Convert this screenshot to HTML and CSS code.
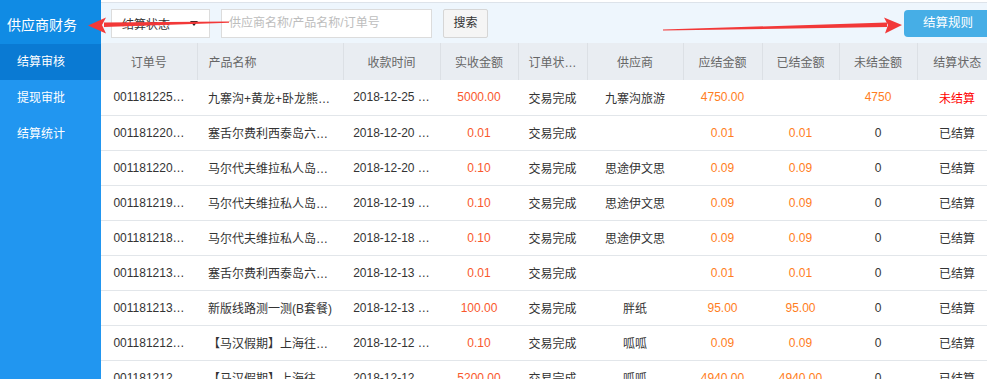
FILE: index.html
```html
<!DOCTYPE html>
<html lang="zh">
<head>
<meta charset="utf-8">
<title>供应商财务</title>
<link rel="stylesheet" href="styles.css">
</head>
<body>
<div class="layout">
  <aside class="sidebar">
    <div class="sb-title">供应商财务</div>
    <div class="sb-item active">结算审核</div>
    <div class="sb-item">提现审批</div>
    <div class="sb-item">结算统计</div>
  </aside>
  <main class="main">
    <div class="topbar">
      <div class="select"><span>结算状态</span><i class="caret"></i></div>
      <div class="input">供应商名称/产品名称/订单号</div>
      <div class="btn-search">搜索</div>
      <div class="btn-rule">结算规则</div>
    </div>
    <table class="grid">
      <colgroup>
        <col style="width:96px"><col style="width:146px"><col style="width:97px"><col style="width:78px"><col style="width:69px">
        <col style="width:96px"><col style="width:79px"><col style="width:77px"><col style="width:78px"><col style="width:80px">
      </colgroup>
      <thead>
        <tr><th>订单号</th><th class="left">产品名称</th><th>收款时间</th><th>实收金额</th><th>订单状…</th><th>供应商</th><th>应结金额</th><th>已结金额</th><th>未结金额</th><th>结算状态</th></tr>
      </thead>
      <tbody>
        <tr><td>001181225…</td><td class="left">九寨沟+黄龙+卧龙熊…</td><td>2018-12-25 …</td><td class="red">5000.00</td><td>交易完成</td><td>九寨沟旅游</td><td class="org">4750.00</td><td class="org"></td><td class="org">4750</td><td class="unpaid">未结算</td></tr>
        <tr><td>001181220…</td><td class="left">塞舌尔费利西泰岛六…</td><td>2018-12-20 …</td><td class="red">0.01</td><td>交易完成</td><td></td><td class="org">0.01</td><td class="org">0.01</td><td>0</td><td>已结算</td></tr>
        <tr><td>001181220…</td><td class="left">马尔代夫维拉私人岛…</td><td>2018-12-20 …</td><td class="red">0.10</td><td>交易完成</td><td>思途伊文思</td><td class="org">0.09</td><td class="org">0.09</td><td>0</td><td>已结算</td></tr>
        <tr><td>001181219…</td><td class="left">马尔代夫维拉私人岛…</td><td>2018-12-19 …</td><td class="red">0.10</td><td>交易完成</td><td>思途伊文思</td><td class="org">0.09</td><td class="org">0.09</td><td>0</td><td>已结算</td></tr>
        <tr><td>001181218…</td><td class="left">马尔代夫维拉私人岛…</td><td>2018-12-18 …</td><td class="red">0.10</td><td>交易完成</td><td>思途伊文思</td><td class="org">0.09</td><td class="org">0.09</td><td>0</td><td>已结算</td></tr>
        <tr><td>001181213…</td><td class="left">塞舌尔费利西泰岛六…</td><td>2018-12-13 …</td><td class="red">0.01</td><td>交易完成</td><td></td><td class="org">0.01</td><td class="org">0.01</td><td>0</td><td>已结算</td></tr>
        <tr><td>001181213…</td><td class="left">新版线路测一测(B套餐)</td><td>2018-12-13 …</td><td class="red">100.00</td><td>交易完成</td><td>胖纸</td><td class="org">95.00</td><td class="org">95.00</td><td>0</td><td>已结算</td></tr>
        <tr><td>001181212…</td><td class="left">【马汉假期】上海往…</td><td>2018-12-12 …</td><td class="red">0.10</td><td>交易完成</td><td>呱呱</td><td class="org">0.09</td><td class="org">0.09</td><td>0</td><td>已结算</td></tr>
        <tr><td>001181212…</td><td class="left">【马汉假期】上海往…</td><td>2018-12-12 …</td><td class="red">5200.00</td><td>交易完成</td><td>呱呱</td><td class="org">4940.00</td><td class="org">4940.00</td><td>0</td><td>已结算</td></tr>
      </tbody>
    </table>
  </main>
</div>
<svg class="marks" width="987" height="379" viewBox="0 0 987 379">
  <polygon fill="#f23838" points="229,21.4 104,22.6 104,27 229,22.8"/>
  <polygon fill="#f23838" points="88,25.5 106,17.5 102,25 106,33.5"/>
  <polygon fill="#f23838" points="663,29.6 887,22.4 887,27 663,30.6"/>
  <polygon fill="#f23838" points="902,25 884,17.5 888,25 885,33.5"/>
</svg>
</body>
</html>
```

FILE: styles.css
```css
html, body {
  margin: 0;
  padding: 0;
}
body {
  width: 987px;
  height: 379px;
  overflow: hidden;
  position: relative;
  background: #fff;
  font-family: "Liberation Sans", "Noto Sans CJK SC", sans-serif;
  font-size: 12px;
  color: #333;
}
.layout {
  display: flex;
  height: 379px;
}
.sidebar {
  width: 101px;
  flex-shrink: 0;
  background: #2196f0;
  color: #fff;
}
.sb-title {
  height: 44px;
  line-height: 50px;
  padding-left: 7px;
  font-size: 14px;
  background: #108be4;
}
.sb-item {
  height: 36px;
  line-height: 36px;
  padding-left: 17px;
  font-size: 12px;
}
.sb-item.active {
  background: #0a7ad3;
}
.main {
  width: 896px;
  flex-shrink: 0;
}
.topbar {
  margin-top: 2px;
  border-top: 1px solid #dde3ea;
  height: 41px;
  background: #eef6fd;
  display: flex;
  align-items: center;
  gap: 11px;
  padding: 0 5px 0 10px;
  box-sizing: border-box;
}
.select {
  width: 99px;
  height: 29px;
  box-sizing: border-box;
  border: 1px solid #dcdcdc;
  background: #fff;
  display: flex;
  align-items: center;
  justify-content: space-between;
  padding: 0 11px 0 10px;
  color: #333;
}
.caret {
  width: 0;
  height: 0;
  border-left: 4px solid transparent;
  border-right: 4px solid transparent;
  border-top: 5px solid #222;
}
.input {
  width: 211px;
  height: 29px;
  box-sizing: border-box;
  border: 1px solid #dcdcdc;
  background: #fff;
  line-height: 27px;
  padding-left: 7px;
  color: #bdbdbd;
}
.btn-search {
  width: 45px;
  height: 29px;
  box-sizing: border-box;
  border: 1px solid #d6d6d6;
  border-radius: 2px;
  background: #f5f5f5;
  text-align: center;
  line-height: 27px;
  color: #333;
}
.btn-rule {
  margin-left: auto;
  width: 88px;
  height: 27px;
  border-radius: 4px;
  background: #46aee6;
  color: #fff;
  text-align: center;
  line-height: 27px;
  font-size: 12.5px;
}
.grid {
  width: 896px;
  table-layout: fixed;
  border-collapse: collapse;
}
.grid thead tr {
  height: 37px;
}
.grid tbody tr {
  height: 35px;
}
.grid th, .grid td {
  padding: 0 10px;
  text-align: center;
  white-space: nowrap;
  overflow: hidden;
  text-overflow: ellipsis;
  font-weight: normal;
}
.grid th {
  background: #e9edf2;
  color: #666;
  border-right: 1px solid #dce0e5;
}
.grid th:last-child {
  border-right: none;
}
.grid td {
  border-bottom: 1px solid #e2e6ea;
}
.grid .left {
  text-align: left;
  padding-left: 11px;
}
.grid td.red {
  color: #f9582c;
}
.grid td.org {
  color: #ff7d22;
}
.grid td.unpaid {
  color: #ff0000;
}
.marks {
  position: absolute;
  left: 0;
  top: 0;
  pointer-events: none;
}
```
